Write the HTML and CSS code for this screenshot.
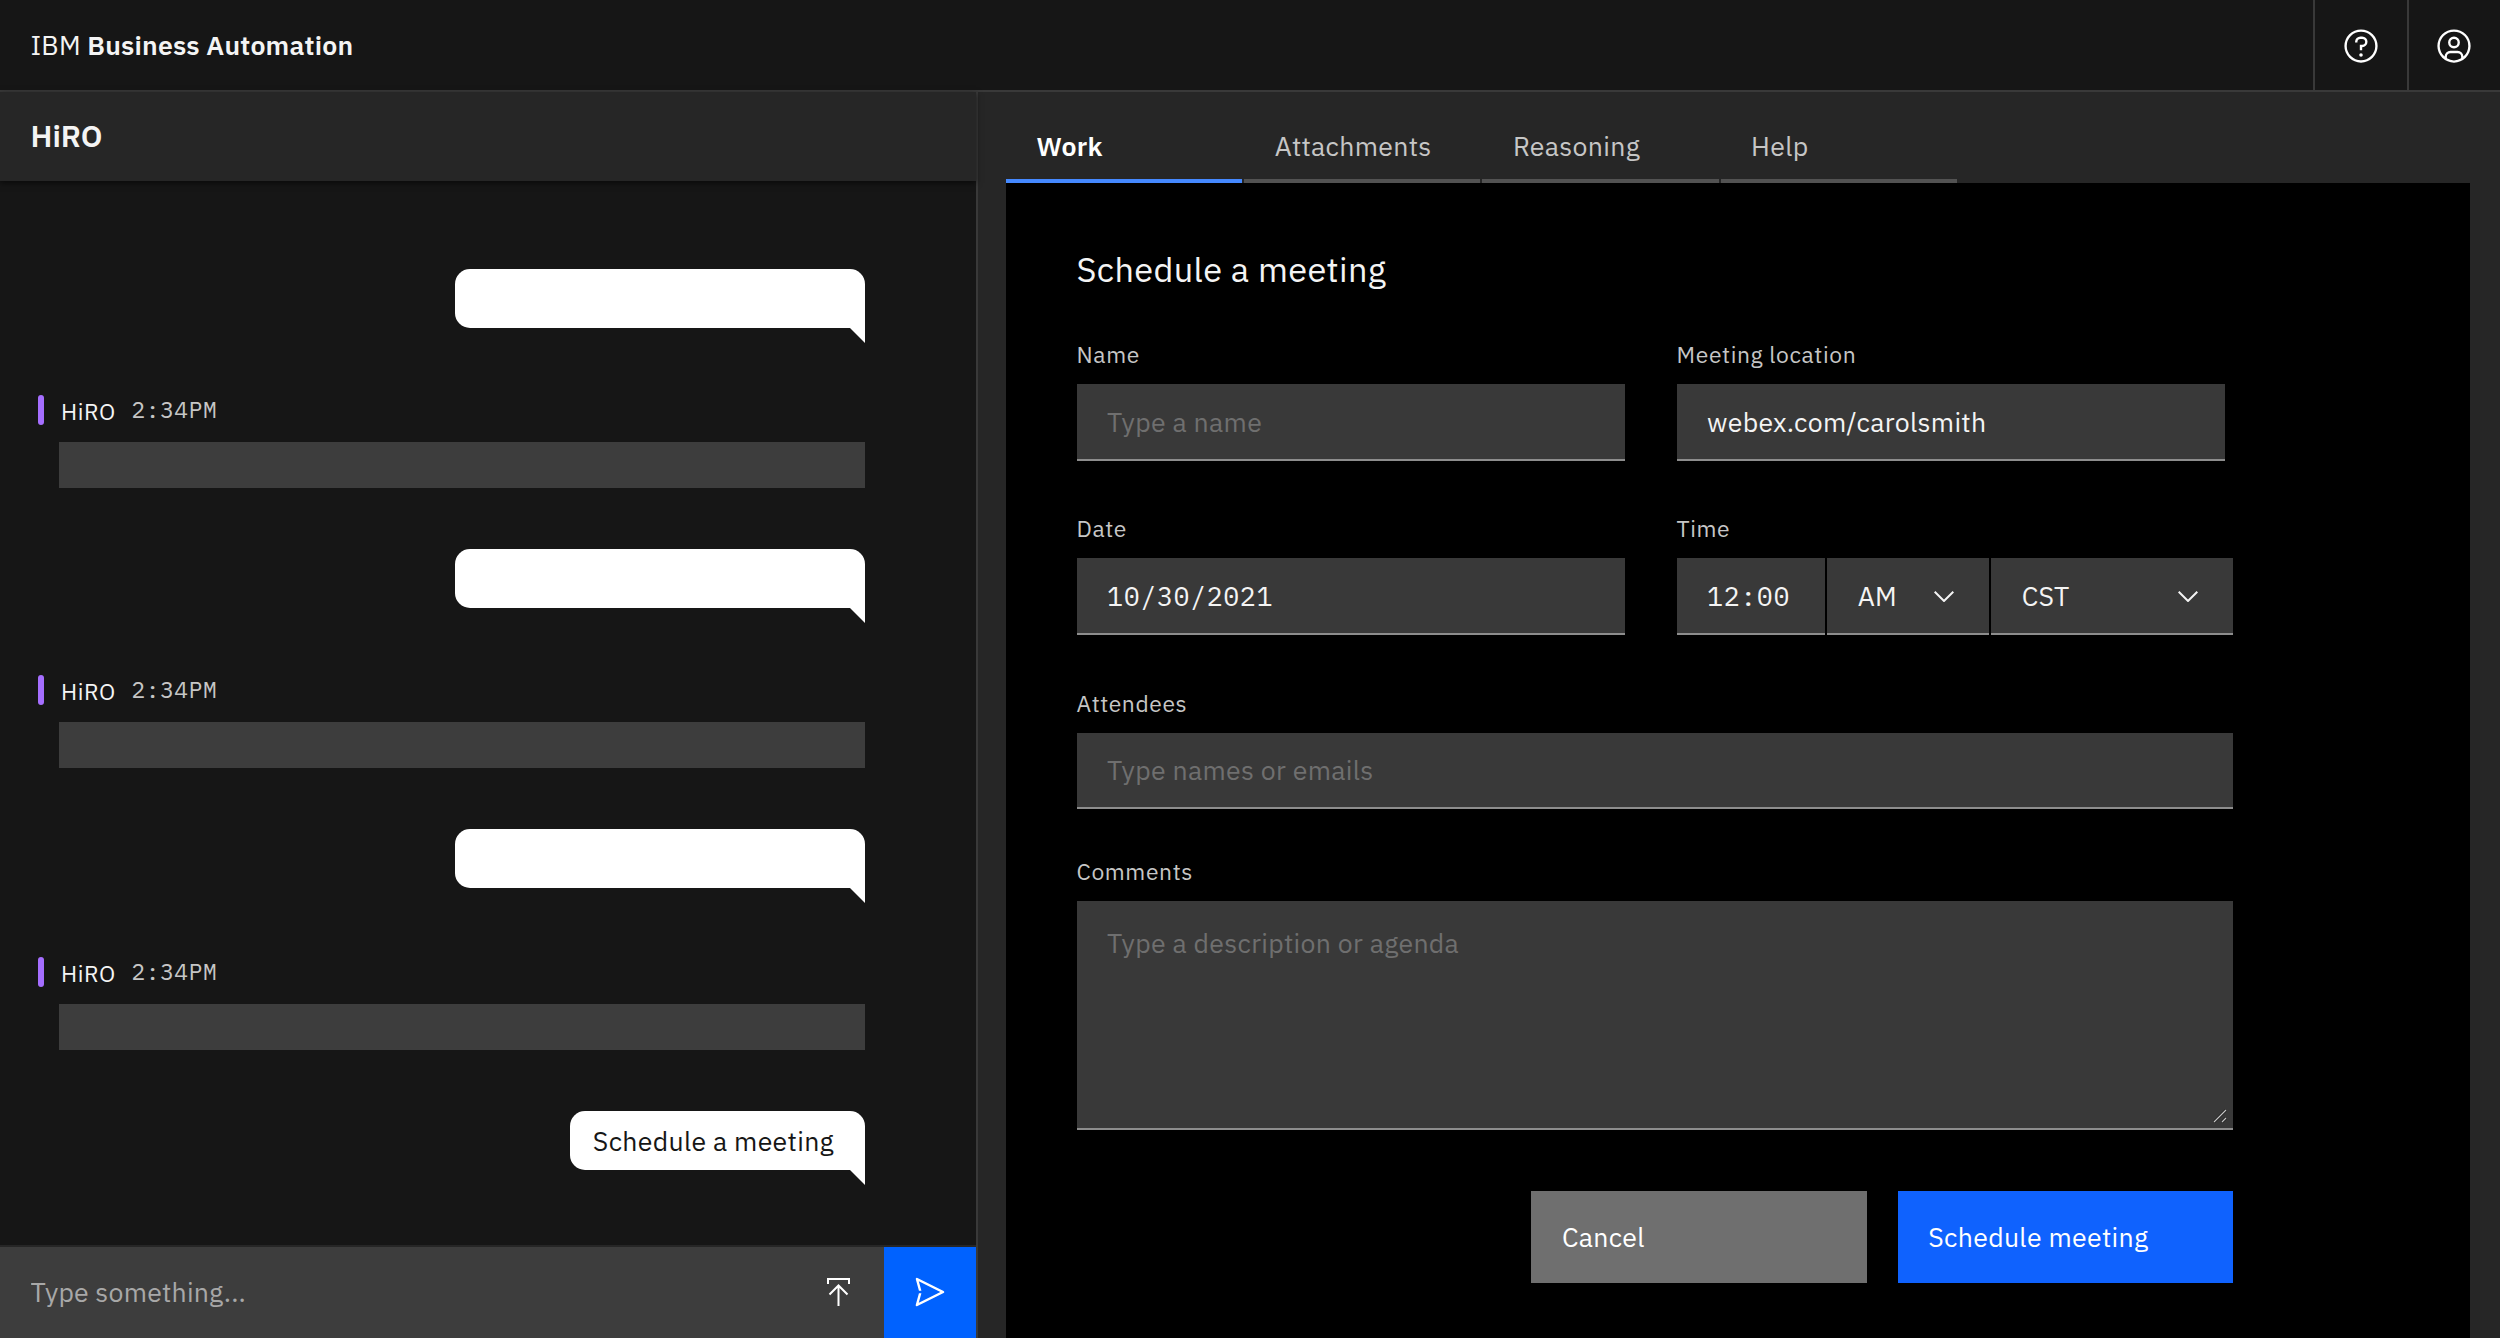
FILE: index.html
```html
<!DOCTYPE html>
<html lang="en">
<head>
    <meta charset="UTF-8">
    <meta name="viewport" content="width=device-width, initial-scale=1.0">
    <title>IBM Business Automation</title>
    <link rel="stylesheet" href="styles.css">
</head>
<body>
    <!-- Header -->
    <header class="header">
        <div class="brand">IBM <span class="brand-name">Business Automation</span></div>
        <button class="header-action" aria-label="Help">
            <svg class="icon" viewBox="0 0 32 32">
                <path d="M16 2a14 14 0 1 0 14 14A14 14 0 0 0 16 2Zm0 26a12 12 0 1 1 12-12 12 12 0 0 1-12 12Z"/>
                <circle cx="16" cy="23.5" r="1.5"/>
                <path d="M17 8h-1.5A4.49 4.49 0 0 0 11 12.5v.5h2v-.5a2.5 2.5 0 0 1 2.5-2.5H17a2.5 2.5 0 0 1 0 5h-2v4.5h2V17a4.5 4.5 0 0 0 0-9Z"/>
            </svg>
        </button>
        <button class="header-action" aria-label="Account">
            <svg class="icon" viewBox="0 0 32 32">
                <path d="M16 8a5 5 0 1 0 5 5 5 5 0 0 0-5-5Zm0 8a3 3 0 1 1 3-3 3 3 0 0 1-3 3Z"/>
                <path d="M16 2a14 14 0 1 0 14 14A14 14 0 0 0 16 2Zm-6 24.38V25a3 3 0 0 1 3-3h6a3 3 0 0 1 3 3v1.38a11.89 11.89 0 0 1-12 0Zm13.99-1.46A5 5 0 0 0 19 20h-6a5 5 0 0 0-4.99 4.92 12 12 0 1 1 15.98 0Z"/>
            </svg>
        </button>
    </header>

    <div class="layout">
        <!-- Chat -->
        <section class="chat">
            <h2 class="chat-title">HiRO</h2>
            <div class="messages">
                <div class="bubble bubble-empty"></div>
                <div class="reply">
                    <div class="reply-meta"><span class="reply-name">HiRO</span><span class="reply-time">2:34PM</span></div>
                    <div class="reply-body"></div>
                </div>
                <div class="bubble bubble-empty"></div>
                <div class="reply">
                    <div class="reply-meta"><span class="reply-name">HiRO</span><span class="reply-time">2:34PM</span></div>
                    <div class="reply-body"></div>
                </div>
                <div class="bubble bubble-empty"></div>
                <div class="reply reply-last">
                    <div class="reply-meta"><span class="reply-name">HiRO</span><span class="reply-time">2:34PM</span></div>
                    <div class="reply-body"></div>
                </div>
                <div class="bubble">Schedule a meeting</div>
            </div>
            <div class="composer">
                <input class="composer-input" type="text" placeholder="Type something...">
                <button class="upload" aria-label="Upload">
                    <svg class="upload-icon" viewBox="0 0 23 28">
                        <path d="M1 6V1h21v5M11.5 28V8M2.5 16.5l9-9 9 9"/>
                    </svg>
                </button>
                <button class="send" aria-label="Send">
                    <svg class="icon" viewBox="0 0 32 32">
                        <path d="M27.45 15.11l-22-11a1 1 0 0 0-1.08.12 1 1 0 0 0-.33 1L6.69 15H18v2H6.69L4 26.74A1 1 0 0 0 5 28a1 1 0 0 0 .45-.11l22-11a1 1 0 0 0 0-1.78Zm-20.9 10L8.76 17H18v-2H8.76L6.55 6.89 24.76 16Z"/>
                    </svg>
                </button>
            </div>
        </section>

        <!-- Workspace -->
        <main class="workspace">
            <nav class="tabs">
                <button class="tab active">Work</button>
                <button class="tab">Attachments</button>
                <button class="tab">Reasoning</button>
                <button class="tab">Help</button>
            </nav>
            <div class="panel">
                <h1 class="panel-title">Schedule a meeting</h1>
                <form class="form">
                    <div class="form-row">
                        <div class="form-group">
                            <label for="name">Name</label>
                            <input class="field" type="text" id="name" placeholder="Type a name">
                        </div>
                        <div class="form-group">
                            <label for="location">Meeting location</label>
                            <input class="field" type="text" id="location" value="webex.com/carolsmith" spellcheck="false">
                        </div>
                    </div>
                    <div class="form-row">
                        <div class="form-group">
                            <label for="date">Date</label>
                            <input class="field mono" type="text" id="date" value="10/30/2021">
                        </div>
                        <div class="form-group">
                            <label for="time">Time</label>
                            <div class="time-fields">
                                <input class="field mono time" type="text" id="time" value="12:00">
                                <button type="button" class="field select period">AM
                                    <svg class="chevron" viewBox="0 0 20 11"><path d="M.7.7l9.3 9.3L19.3.7"/></svg>
                                </button>
                                <button type="button" class="field select zone">CST
                                    <svg class="chevron" viewBox="0 0 20 11"><path d="M.7.7l9.3 9.3L19.3.7"/></svg>
                                </button>
                            </div>
                        </div>
                    </div>
                    <div class="form-group attendees">
                        <label for="attendees">Attendees</label>
                        <input class="field" type="text" id="attendees" placeholder="Type names or emails">
                    </div>
                    <div class="form-group comments">
                        <label for="comments">Comments</label>
                        <textarea class="field" id="comments" placeholder="Type a description or agenda"></textarea>
                        <svg class="resizer" viewBox="0 0 14 14">
                            <path class="resizer-shadow" d="M1 13L13 1M9 13l4-4"/>
                            <path class="resizer-line" d="M1 13L13 1M9 13l4-4"/>
                        </svg>
                    </div>
                    <div class="actions">
                        <button type="button" class="btn btn-secondary">Cancel</button>
                        <button type="button" class="btn btn-primary">Schedule meeting</button>
                    </div>
                </form>
            </div>
        </main>
    </div>
</body>
</html>
```

FILE: styles.css
```css
/* General Styling */
* {
    margin: 0;
    padding: 0;
    box-sizing: border-box;
}
body {
    height: 1338px;
    overflow: hidden;
    display: flex;
    flex-direction: column;
    font-family: "IBM Plex Sans", Roboto, sans-serif;
    font-size: 26.67px;
    line-height: 34px;
    letter-spacing: 0.3px;
    background-color: #262626;
    color: #f4f4f4;
}
button, input, textarea {
    border: none;
    border-radius: 0;
    background: none;
    color: inherit;
    font: inherit;
    letter-spacing: inherit;
    text-align: left;
    outline: none;
}
button {
    cursor: pointer;
}

/* Header */
.header {
    display: flex;
    height: 92px;
    flex: none;
    background-color: #161616;
    border-bottom: 2px solid #393939;
}
.brand {
    flex: 1;
    padding: 28px 30.5px;
    letter-spacing: 0.2px;
}
.brand-name {
    font-weight: 600;
}
.header-action {
    display: flex;
    align-items: center;
    width: 94px;
    height: 90px;
    padding: 1px 0 0 27px;
    border-left: 2px solid #393939;
}
.header-action:last-child {
    width: 93px;
    padding-left: 26px;
}
.icon {
    width: 38px;
    height: 38px;
    fill: #fff;
}

/* Layout */
.layout {
    display: flex;
    flex: 1;
    min-height: 0;
}

/* Chat */
.chat {
    display: flex;
    flex-direction: column;
    flex: none;
    width: 978px;
    background-color: #161616;
    border-right: 2px solid #393939;
}
.chat-title {
    flex: none;
    height: 89px;
    padding: 25px 30.5px;
    background-color: #262626;
    box-shadow: 0 2px 6px rgba(0, 0, 0, 0.6);
    font-size: 30.5px;
    font-weight: 600;
    line-height: 38px;
    letter-spacing: 0;
}
.messages {
    flex: 1;
    display: flex;
    flex-direction: column;
    padding: 88px 111px 0 38px;
}
.bubble {
    position: relative;
    align-self: flex-end;
    height: 59px;
    margin-bottom: 67px;
    padding: 13px 31px 0 23px;
    border-radius: 15px 15px 0 15px;
    background-color: #fff;
    color: #161616;
}
.bubble-empty {
    width: 410px;
}
/* Tail of the bubble */
.bubble::after {
    content: "";
    position: absolute;
    right: 0;
    top: 58px;
    width: 16px;
    height: 16px;
    background-color: #fff;
    clip-path: polygon(0 0, 100% 0, 100% 100%);
}
.reply {
    margin-bottom: 61px;
}
.reply-last {
    margin-top: 2px;
}
.reply-meta {
    position: relative;
    display: flex;
    gap: 15.5px;
    height: 30px;
    padding-left: 23px;
    font-size: 22.86px;
    letter-spacing: 0.6px;
}
.reply-meta::before {
    content: "";
    position: absolute;
    left: 0;
    top: 0;
    width: 6px;
    height: 30px;
    border-radius: 3px;
    background-color: #a56eff;
}
.reply-time {
    margin-top: -2px;
    font-family: "IBM Plex Mono", "Liberation Mono", monospace;
    color: #c6c6c6;
}
.reply-body {
    height: 46px;
    margin: 17px 0 0 21px;
    background-color: #3d3d3d;
}

/* Composer */
.composer {
    display: flex;
    flex: none;
    height: 93px;
    border-top: 2px solid #262626;
    background-color: #3d3d3d;
}
.composer-input {
    flex: 1;
    padding: 0 30.5px 2px;
    letter-spacing: 0.2px;
}
.composer-input::placeholder {
    color: #a8a8a8;
}
.upload, .send {
    display: flex;
    align-items: center;
    padding-bottom: 1px;
}
.upload {
    width: 57px;
}
.upload-icon {
    width: 23px;
    height: 28px;
    fill: none;
    stroke: #fff;
    stroke-width: 2;
}
.send {
    width: 92px;
    padding-left: 27px;
    background-color: #0062ff;
}

/* Tabs */
.workspace {
    flex: 1;
    display: flex;
    flex-direction: column;
    padding: 0 30px 0 28px;
}
.tabs {
    display: flex;
    gap: 2px;
    height: 91px;
}
.tab {
    width: 236.2px;
    padding-left: 30.5px;
    padding-top: 21px;
    border-bottom: 4px solid #525252;
    color: #c6c6c6;
}
.tab.active {
    border-bottom-color: #4589ff;
    color: #fff;
    font-weight: 600;
}

/* Panel */
.panel {
    flex: 1;
    padding: 64px 0 0 70.6px;
    background-color: #000;
}
.panel-title {
    height: 44px;
    font-size: 34.3px;
    font-weight: 400;
    line-height: 44px;
    letter-spacing: 0.35px;
}
.form {
    width: 1156.6px;
    padding-top: 48px;
}
.form-row {
    display: flex;
    gap: 51.4px;
    margin-bottom: 52px;
}
.form-row + .form-row {
    margin-bottom: 53px;
}
.form-group label {
    display: block;
    height: 45px;
    font-size: 22.86px;
    line-height: 32px;
    letter-spacing: 0.6px;
    color: #c6c6c6;
}
.field {
    display: block;
    width: 548.6px;
    height: 77px;
    padding: 0 30.5px;
    background-color: #393939;
    border-bottom: 2px solid #8d8d8d;
}
.field::placeholder {
    color: #6f6f6f;
}
.mono {
    font-family: "IBM Plex Mono", "Liberation Mono", monospace;
    letter-spacing: 0.6px;
}
.time-fields {
    display: flex;
    gap: 2px;
}
.time {
    width: 148.6px;
    padding-right: 0;
}
.select {
    display: flex;
    align-items: center;
    justify-content: space-between;
    padding-right: 35.5px;
}
.period {
    width: 162px;
}
.zone {
    width: 242px;
}
.chevron {
    width: 20px;
    height: 11px;
    margin-top: 1px;
    fill: none;
    stroke: #f4f4f4;
    stroke-width: 2;
}
.attendees .field {
    width: 1156.6px;
    height: 76px;
}
.attendees {
    margin-bottom: 47px;
}
.comments {
    position: relative;
}
.comments .field {
    width: 1156.6px;
    height: 229px;
    padding-top: 25px;
    resize: none;
}
.resizer {
    position: absolute;
    right: 6px;
    bottom: 7px;
    width: 14px;
    height: 14px;
    fill: none;
}
.resizer-shadow {
    stroke: #1c1c1c;
    stroke-width: 2.5;
}
.resizer-line {
    stroke: #c6c6c6;
    stroke-width: 1.2;
}

/* Buttons */
.actions {
    display: flex;
    justify-content: flex-end;
    gap: 31px;
    margin-top: 61px;
}
.btn {
    width: 335.4px;
    height: 92px;
    padding: 0 0 1px 30.5px;
    color: #fff;
}
.btn-secondary {
    background-color: #6f6f6f;
}
.btn-primary {
    background-color: #0f62fe;
}
```
